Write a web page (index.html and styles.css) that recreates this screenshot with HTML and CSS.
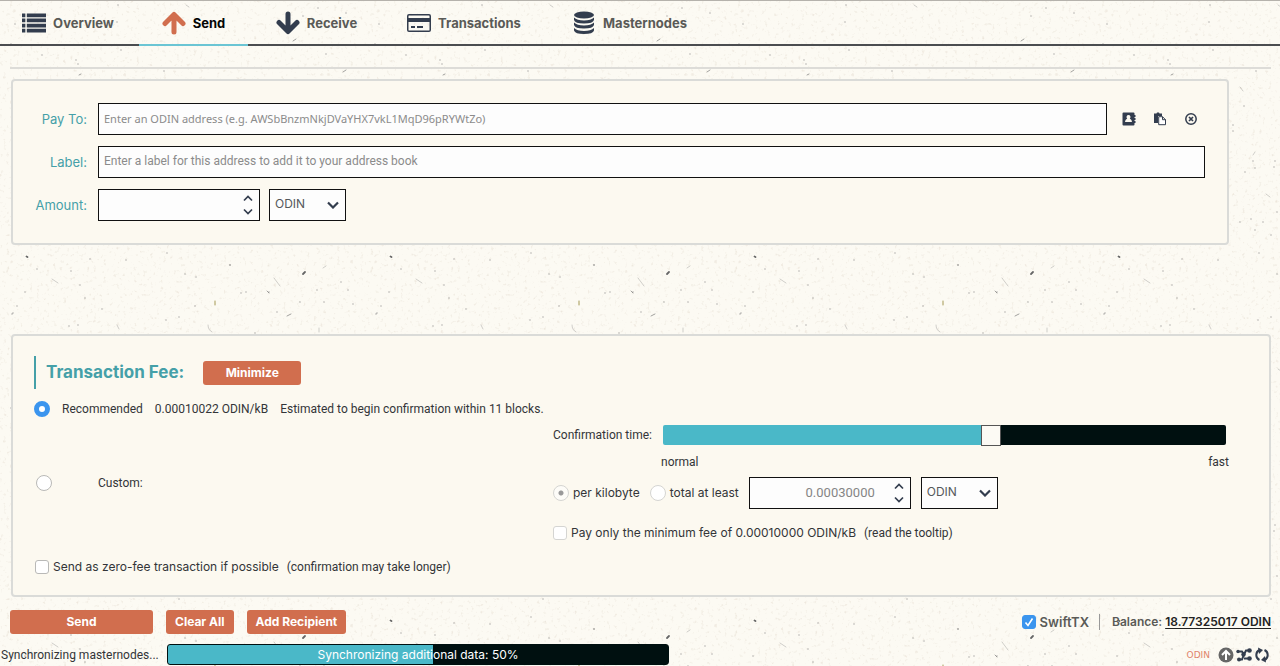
FILE: index.html
```html
<!DOCTYPE html>
<html lang="en">
<head>
<meta charset="utf-8">
<title>ODIN Wallet</title>
<link rel="stylesheet" href="styles.css">
</head>
<body>
<nav class="tabs">
  <a class="tab tab-overview" href="#overview">
    <svg class="tab-icon" viewBox="0 0 25 24" aria-hidden="true"><path d="M0 2h3.500v4H0zM0 7.300h3.500v4H0zM0 12.700h3.500v4H0zM0 18h3.500v4H0zM5 2h20v4H5zM5 7.300h20v4H5zM5 12.700h20v4H5zM5 18h20v4H5z"/></svg>
    Overview
  </a>
  <a class="tab tab-send active" href="#send">
    <svg class="tab-icon" viewBox="0 0 24 24" aria-hidden="true"><path class="arrow" d="M12 21V5M3 12.500L12 3.500L21 12.500"/></svg>
    Send
  </a>
  <a class="tab tab-receive" href="#receive">
    <svg class="tab-icon" viewBox="0 0 24 24" aria-hidden="true"><path class="arrow" d="M12 3V19M3 11.500L12 20.500L21 11.500"/></svg>
    Receive
  </a>
  <a class="tab tab-transactions" href="#transactions">
    <svg class="tab-icon" viewBox="0 0 24 24" aria-hidden="true"><path fill-rule="evenodd" d="M2 3h20q2 0 2 2v14q0 2-2 2H2q-2 0-2-2V5q0-2 2-2zM2 4.500q-.500 0-.500.500v2h21V5q0-.500-.500-.500zM1.500 11v8q0 .500.500.500h20q.500 0 .500-.500v-8zM4 15h4v2H4zM10 15h6v2h-6z"/></svg>
    Transactions
  </a>
  <a class="tab tab-masternodes" href="#masternodes">
    <svg class="tab-icon" viewBox="0 0 22 24" aria-hidden="true"><ellipse cx="11" cy="4" rx="10" ry="3.500"/><path d="M1 6.500q3 3 10 3t10-3V9q-1 3.500-10 3.500T1 9zM1 11.500q3 3 10 3t10-3V14q-1 3.500-10 3.500T1 14zM1 17q3 3 10 3t10-3v2.500q-1 3.500-10 3.500T1 19.500z"/></svg>
    Masternodes
  </a>
</nav>
<main class="page">
  <section class="recipients">
    <form class="panel recipient">
      <label class="field-label" for="pay-to">Pay To:</label>
      <div class="field-row">
        <input class="box pay-to" id="pay-to" type="text" placeholder="Enter an ODIN address (e.g. AWSbBnzmNkjDVaYHX7vkL1MqD96pRYWtZo)">
        <div class="tools">
          <button class="tool" type="button" aria-label="Choose from address book"><svg viewBox="0 0 14 14"><path fill-rule="evenodd" d="M1.500.500h10q1 0 1 1v11q0 1-1 1h-10q-1 0-1-1v-11q0-1 1-1zM6.500 3a2 2 0 0 0-1.300 3.500Q3 7.500 3 10h7q0-2.500-2.200-3.500A2 2 0 0 0 6.500 3z"/><path d="M12 3h1.500v2H12zM12 6h1.500v2H12zM12 9h1.500v2H12z"/></svg></button>
          <button class="tool" type="button" aria-label="Paste address"><svg viewBox="0 0 14 14"><path d="M1 1.500h2.500l.500-1h2l.500 1h2.500v2.500H5v7H1z"/><path class="line" d="M5.700 4.700h3.800l3 3v5H5.700zM9.500 4.700v3h3"/></svg></button>
          <button class="tool" type="button" aria-label="Remove this entry"><svg viewBox="0 0 14 14"><circle class="ring" cx="7" cy="7" r="5.200"/><path class="cross" d="M5 5l4 4M9 5L5 9"/></svg></button>
        </div>
      </div>
      <label class="field-label" for="label">Label:</label>
      <input class="box" id="label" type="text" placeholder="Enter a label for this address to add it to your address book">
      <label class="field-label" for="amount">Amount:</label>
      <div class="field-row amounts">
        <div class="spin">
          <input class="box" id="amount" type="text">
          <svg class="spin-arrows" viewBox="0 0 10 20" aria-hidden="true"><path d="M1 5.500l4-4 4 4M1 14.500l4 4 4-4"/></svg>
        </div>
        <div class="pick">
          <select class="box" aria-label="Unit"><option>ODIN</option></select>
          <svg class="pick-arrow" viewBox="0 0 12 8" aria-hidden="true"><path d="M1 1.500l5 5 5-5"/></svg>
        </div>
      </div>
    </form>
  </section>

  <section class="panel fee">
    <div class="fee-head">
      <h2 class="fee-title">Transaction Fee:</h2>
      <button class="btn minimize" type="button">Minimize</button>
    </div>
    <div class="recommended">
      <input class="radio" type="radio" name="fee" id="recommended" checked>
      <label for="recommended">Recommended</label>
      <span>0.00010022 ODIN/kB</span>
      <span>Estimated to begin confirmation within 11 blocks.</span>
    </div>
    <div class="custom">
      <input class="radio" type="radio" name="fee" id="custom">
      <label class="custom-label" for="custom">Custom:</label>
      <div class="options">
        <div class="confirm">
          <label for="speed">Confirmation time:</label>
          <input class="slider" id="speed" type="range" min="0" max="1000" value="586">
        </div>
        <div class="ends"><span>normal</span><span>fast</span></div>
        <div class="per">
          <label class="choice"><input class="radio" type="radio" name="per" checked disabled>per kilobyte</label>
          <label class="choice"><input class="radio" type="radio" name="per" disabled>total at least</label>
          <div class="spin">
            <input class="box fee-value" type="text" value="0.00030000" aria-label="Custom fee">
            <svg class="spin-arrows" viewBox="0 0 10 20" aria-hidden="true"><path d="M1 5.500l4-4 4 4M1 14.500l4 4 4-4"/></svg>
          </div>
          <div class="pick">
            <select class="box" aria-label="Fee unit"><option>ODIN</option></select>
            <svg class="pick-arrow" viewBox="0 0 12 8" aria-hidden="true"><path d="M1 1.500l5 5 5-5"/></svg>
          </div>
        </div>
        <div class="minimum">
          <label class="choice"><input class="check" type="checkbox" disabled>Pay only the minimum fee of 0.00010000 ODIN/kB</label>
          <span>(read the tooltip)</span>
        </div>
      </div>
    </div>
    <div class="zero-fee">
      <label class="choice"><input class="check" type="checkbox">Send as zero-fee transaction if possible</label>
      <span>(confirmation may take longer)</span>
    </div>
  </section>

  <div class="actions">
    <button class="btn send" type="button">Send</button>
    <button class="btn" type="button">Clear All</button>
    <button class="btn" type="button">Add Recipient</button>
    <div class="summary">
      <label class="choice swift"><input class="check" type="checkbox" checked>SwiftTX</label>
      <span class="balance">Balance: <a href="#balance">18.77325017 ODIN</a></span>
    </div>
  </div>
</main>
<footer class="status">
  <span class="status-text">Synchronizing masternodes...</span>
  <div class="progress" role="progressbar" aria-valuenow="50" aria-valuemin="0" aria-valuemax="100">Synchronizing additional data: 50%</div>
  <div class="status-icons">
    <span class="unit">ODIN</span>
    <svg class="status-icon grey" viewBox="0 0 16 16" aria-hidden="true"><circle cx="8" cy="8" r="7.500"/><path class="up" d="M8 13V4.500M4 8l4-4 4 4"/></svg>
    <svg class="status-icon" viewBox="0 0 16 16" aria-hidden="true"><path class="links" d="M2 4.500h4l2 3 2-4h3M2 12.500h4l2-5M8 11.500h5"/><circle cx="2" cy="4.500" r="1.700"/><circle cx="3" cy="12.500" r="2"/><circle cx="13.500" cy="3.500" r="2.300"/><circle cx="7.500" cy="7.500" r="2.200"/><circle cx="13.500" cy="11.500" r="2.300"/></svg>
    <svg class="status-icon" viewBox="0 0 16 16" aria-hidden="true"><path class="sync" d="M5.500 13A5.500 5.500 0 0 1 5.500 3M10.500 3a5.500 5.500 0 0 1 0 10"/><path d="M4 .500l5 2.500-4 4zM12 15.500L7 13l4-4z"/></svg>
  </div>
</footer>
</body>
</html>
```
FILE: styles.css
```css
* { box-sizing: border-box; }

body {
  margin: 0;
  min-height: 100vh;
  display: flex;
  flex-direction: column;
  color: #333538;
  font: 12px/16px Roboto, "Liberation Sans", sans-serif;
  background-color: #fcfaf3;
  /* recycled-paper tile: fine grain plus flecks */
  background-image: url("data:image/svg+xml,%3Csvg xmlns='http://www.w3.org/2000/svg' width='364' height='364'%3E%3Cfilter id='g' x='0' y='0' width='100%25' height='100%25'%3E%3CfeTurbulence type='fractalNoise' baseFrequency='.3' numOctaves='2' seed='4' stitchTiles='stitch'/%3E%3CfeColorMatrix values='0 0 0 0 .6 0 0 0 0 .5 0 0 0 0 .4 2.500 0 0 0 -1.500'/%3E%3C/filter%3E%3Crect width='364' height='364' filter='url(%23g)' opacity='.4'/%3E%3Cg stroke='%23777' stroke-width='1.300' stroke-linecap='round' fill='none' opacity='.7'%3E%3Cpath d='M126 260h0M90 259h0M71 271h0M37 269h0M167 253h0M269 292h0M102 309h0M85 298h0M80 285h0M196 277h0M185 274h0M25 292h0M12 314h0M17 306h0M69 326h0M78 325h0M195 306h0M179 317h0M166 320h0M317 290h0M353 304h0M13 313h0M348 290h0M341 282h0M255 333h0M277 312h0M300 302h0M324 302h0M246 292h0M241 293h0M118 5h0M117 22h0M15 24h0M76 60h0M121 50h0M78 64h0M164 71h0M42 55h0M11 44h0M303 16h0M318 8h0M346 13h0M326 54h0M141 131h0M152 106h0M141 125h0M163 168h0M161 161h0M183 161h0M153 172h0M182 167h0M159 219h0M148 222h0M171 222h0M179 235h0M163 230h0M185 212h0'/%3E%3C/g%3E%3Cg stroke='%23666' stroke-linecap='round' fill='none'%3E%3Cpath stroke-width='1.800' d='M26.500 256.500l1 .500M303 274l2-2'/%3E%3Cpath stroke-width='1.500' d='M230 265h0'/%3E%3Cpath opacity='.6' d='M287 316l4-2M267 291l2 2M293 41l3-2M343 72l3-2M79 75l2-1'/%3E%3Cpath opacity='.3' d='M323 268l3-2M319 328v4M117 325l2 4M208 325q0 5 4 7M186 5l3 2M148 87l3 4M161 155l2-3M174 194l4 3M52 279l6 4M274 278l6 8'/%3E%3Cpath stroke='%23a59a55' d='M215 301v4'/%3E%3C/g%3E%3C/svg%3E");
}

button, input, select { font: inherit; margin: 0; }

/* tabs */
.tabs {
  display: flex;
  height: 46px;
  border-top: 1px solid #b5b2ac;
  border-bottom: 2px solid #4b4d50;
}
.tab {
  display: flex;
  align-items: center;
  justify-content: center;
  gap: 7px;
  margin-bottom: -2px;
  border-bottom: 2px solid transparent;
  color: #5a5a57;
  font-family: Inter, sans-serif;
  font-size: 13px;
  font-weight: 700;
  text-decoration: none;
}
.tab-overview { width: 139px; padding-right: 3px; }
.tab-send { width: 109px; }
.tab-receive { width: 137px; }
.tab-transactions { width: 158px; }
.tab-masternodes { width: 173px; }
.tab.active { color: #050505; border-color: #6bc5d4; }
.tab-icon { width: 24px; height: 24px; fill: #333d4e; }
.arrow { fill: none; stroke: #333d4e; stroke-width: 5; stroke-linecap: round; stroke-linejoin: round; }
.active .arrow { stroke: #d16e4e; }

/* page */
.page {
  flex: 1;
  display: flex;
  flex-direction: column;
  padding: 21px 9px 0 10px;
}
.recipients {
  flex: 1;
  border-top: 2px solid #dddcd8;
  padding: 10px 42px 0 0;
}
.panel {
  margin-left: 1px;
  border: 2px solid #dadbd8;
  border-radius: 4px;
  background: #fcf9f0;
}
.recipient {
  display: grid;
  grid-template-columns: 52px 1fr;
  column-gap: 11px;
  row-gap: 11px;
  align-items: center;
  padding: 22px;
}
.field-label {
  color: #45a0a8;
  font-family: Inter, sans-serif;
  font-size: 13px;
  text-align: right;
}
.field-row { display: flex; }
.box {
  width: 100%;
  height: 32px;
  padding: 0 5px 2px;
  border: 1px solid #111;
  border-radius: 0;
  background: #fdfdfd;
  color: #55585b;
}
.box::placeholder { color: #8b8b8b; opacity: 1; }
.pay-to { flex: 1; font-family: "Noto Sans", sans-serif; font-size: 11px; }
.tools {
  display: flex;
  align-items: center;
  gap: 17px;
  padding: 0 7px 0 15px;
}
.tool {
  width: 14px;
  height: 14px;
  padding: 0;
  border: 0;
  background: none;
}
.tool svg { display: block; fill: #333d4e; }
.tool .line { fill: #fff; stroke: #333d4e; }
.tool .ring { fill: none; stroke: #333d4e; stroke-width: 1.500; }
.tool .cross { stroke: #333d4e; stroke-width: 1.700; }
.amounts { gap: 9px; }
.spin, .pick { position: relative; }
.spin { width: 162px; }
.pick { width: 77px; font-family: Inter, sans-serif; }
.pick select { appearance: none; }
.spin-arrows, .pick-arrow {
  position: absolute;
  fill: none;
  stroke: #333d4e;
  pointer-events: none;
}
.spin-arrows { width: 10px; height: 20px; right: 7px; top: 6px; stroke-width: 1.700; }
.pick-arrow { width: 12px; height: 8px; right: 7px; top: 12px; stroke-width: 2.200; }

/* transaction fee */
.fee { padding: 20px 40px 20px 21px; }
.fee-head { display: flex; align-items: center; gap: 19px; }
.fee-title {
  margin: 0;
  padding-left: 10px;
  border-left: 2px solid #45a0a8;
  color: #45a0a8;
  font-family: Inter, sans-serif;
  font-size: 17px;
  line-height: 33px;
}
.btn {
  height: 24px;
  padding: 0 9px;
  border: 0;
  border-radius: 3px;
  background: #d16e4e;
  color: #fff;
  font-family: Inter, sans-serif;
  font-weight: 700;
}
.minimize { width: 98px; }
.recommended {
  display: flex;
  align-items: center;
  gap: 12px;
  margin-top: 12px;
}
.radio, .check {
  appearance: none;
  flex: none;
  border: 1px solid #b9b9b7;
  background: #fff;
}
.radio { width: 16px; height: 16px; border-radius: 50%; }
.radio:checked { border: 5px solid #3b95ee; }
.radio:disabled { border: 1px solid #d5d5d2; }
.radio:disabled:checked { background: radial-gradient(circle, #999 0 2px, #fdfcf8 3px); }
.check { width: 14px; height: 14px; border-radius: 3px; }
.check:disabled { border-color: #d5d5d2; }
.check:checked {
  border-color: #3b95ee;
  background: #3b95ee url("data:image/svg+xml,%3Csvg xmlns='http://www.w3.org/2000/svg' viewBox='0 0 12 12'%3E%3Cpath d='M2.500 6.500l2.500 3L9.500 2.500' fill='none' stroke='white' stroke-width='1.600'/%3E%3C/svg%3E");
}
.custom {
  display: grid;
  grid-template-columns: 62px 455px 1fr;
  align-items: center;
  padding-left: 2px;
  margin-top: 8px;
}
.options { display: flex; flex-direction: column; }
.confirm { display: flex; align-items: center; gap: 11px; padding-right: 3px; }
.slider {
  appearance: none;
  flex: 1;
  height: 20px;
  border-radius: 2px;
  background: linear-gradient(90deg, #4ab8c8 58%, #001010 58%);
}
.slider::-webkit-slider-thumb {
  appearance: none;
  width: 20px;
  height: 21px;
  border: 1px solid #555;
  background: #fcfaf4;
}
.ends { display: flex; justify-content: space-between; padding: 9px 0 7px 108px; }
.per { display: flex; align-items: center; gap: 10px; }
.choice {
  display: flex;
  align-items: center;
  gap: 4px;
  font-family: Inter, sans-serif;
}
.fee-value { padding-right: 35px; text-align: right; color: #858585; font-size: 13px; }
.minimum, .zero-fee { display: flex; align-items: center; gap: 8px; }
.minimum { margin-top: 16px; }
.zero-fee { margin-top: 18px; padding-left: 1px; }

/* actions */
.actions {
  display: flex;
  align-items: center;
  gap: 13px;
  padding: 13px 0 10px;
}
.send { width: 143px; }
.summary {
  display: flex;
  margin-left: auto;
  color: #5a5a57;
  font-family: Inter, sans-serif;
  font-weight: 600;
}
.swift { padding-right: 10px; border-right: 1px solid #999; font-size: 13px; }
.balance { padding-left: 12px; }
.balance a { color: #222; text-underline-offset: 2px; }

/* status bar */
.status { display: flex; align-items: center; padding: 0 10px 1px 1px; }
.status-text { width: 166px; white-space: nowrap; }
.progress {
  flex: 0 1 502px;
  border: 1px solid #001010;
  border-radius: 3px;
  background: linear-gradient(90deg, #4ab8c8 53%, #001010 53%);
  color: #fff;
  font-family: Inter, sans-serif;
  line-height: 19px;
  text-align: center;
}
.status-icons { display: flex; align-items: center; gap: 2px; margin-left: auto; }
.unit { margin-right: 6px; color: #e0846a; font: 9px/16px "DejaVu Sans", sans-serif; }
.status-icon { width: 16px; height: 16px; fill: #333d4e; }
.grey { fill: #666; }
.up { fill: none; stroke: #fff; stroke-width: 2; }
.links, .sync { fill: none; stroke: #333d4e; stroke-width: 2; }
```
